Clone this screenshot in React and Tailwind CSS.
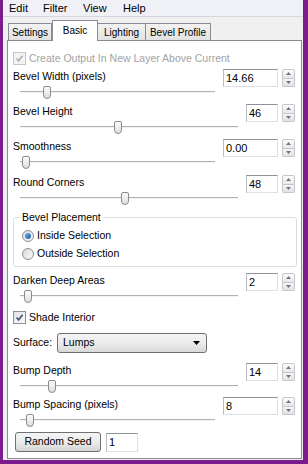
import React from 'react';

const rows = {
  bevelWidth: { label: 'Bevel Width (pixels)', value: '14.66', wide: true, thumb: 30, h: 'h-[35px]' },
  bevelHeight: { label: 'Bevel Height', value: '46', wide: false, thumb: 101, h: 'h-[35px]' },
  smoothness: { label: 'Smoothness', value: '0.00', wide: true, thumb: 9, h: 'h-[36px]' },
  roundCorners: { label: 'Round Corners', value: '48', wide: false, thumb: 108, h: 'h-[35px]' },
  darken: { label: 'Darken Deep Areas', value: '2', wide: false, thumb: 11, h: 'h-[35px]' },
  bumpDepth: { label: 'Bump Depth', value: '14', wide: false, thumb: 35, h: 'h-[34px]' },
  bumpSpacing: { label: 'Bump Spacing (pixels)', value: '8', wide: true, thumb: 13, h: 'h-[34px]' },
};

function Arrow({ up }) {
  return (
    <svg width="5" height="3" viewBox="0 0 5 3">
      <path d={up ? 'M0 3 L2.5 0 L5 3 Z' : 'M0 0 L2.5 3 L5 0 Z'} fill="#6a7487" />
    </svg>
  );
}

function Spinner() {
  return (
    <div className="flex flex-col w-[13px] h-full">
      <div className="flex-1 flex items-center justify-center border border-[#c4c6ca] rounded-t-[2px] bg-gradient-to-b from-[#fdfdfd] to-[#e8e8e8]">
        <Arrow up />
      </div>
      <div className="flex-1 flex items-center justify-center border border-t-0 border-[#c4c6ca] rounded-b-[2px] bg-gradient-to-b from-[#f6f6f6] to-[#e2e2e2]">
        <Arrow />
      </div>
    </div>
  );
}

function SpinBox({ value, wide }) {
  return (
    <div className="flex h-[18px] gap-[4px] pr-[2px]">
      <div className={`${wide ? 'w-[55px]' : 'w-[32px]'} h-full bg-white border border-[#dbdfe6] border-t-[#8d9198] border-l-[#b9bcc2] pl-[2px] flex items-center leading-none text-[11px]`}>
        {value}
      </div>
      <Spinner />
    </div>
  );
}

function SliderRow({ label, value, wide, thumb, h }) {
  return (
    <div className={`flex ${h}`}>
      <div className="flex-1 flex flex-col">
        <div className="h-[14px] leading-[14px]">{label}</div>
        <div className="relative h-[20px] pl-[7px] pr-[8px]">
          <div className="mt-[8px] h-[2px] border-t border-[#b0b2b5] bg-[#f3f3f3]" />
          <div
            className="absolute top-[3px] w-[8px] h-[13px] border border-[#8a8c90] rounded-t-[2px] rounded-b-[4px] bg-gradient-to-b from-[#fbfbfb] to-[#dedede]"
            style={{ left: thumb }}
          />
        </div>
      </div>
      <SpinBox value={value} wide={wide} />
    </div>
  );
}

function Check({ checked, disabled }) {
  return (
    <div className={`w-[13px] h-[13px] border flex items-center justify-center ${disabled ? 'border-[#c6c6c6] bg-[#f4f4f4]' : 'border-[#8e8f8f] bg-gradient-to-br from-[#e2e3e5] to-[#fbfbfb]'}`}>
      {checked && (
        <svg width="9" height="9" viewBox="0 0 9 9">
          <path d="M1.5 4.5 L3.6 6.8 L7.6 1.8" fill="none" stroke={disabled ? '#b4b4b4' : '#4a5a80'} strokeWidth="1.8" />
        </svg>
      )}
    </div>
  );
}

function Radio({ label, selected }) {
  return (
    <div className="flex items-center h-[13px] gap-[3px]">
      <div className="w-[12px] h-[12px] rounded-full border border-[#8e8f8f] bg-gradient-to-br from-[#d8d9db] to-[#fafafa] flex items-center justify-center">
        {selected && <div className="w-[6px] h-[6px] rounded-full bg-gradient-to-br from-[#6fb0e6] to-[#1d5ea6]" />}
      </div>
      <span className="leading-[13px]">{label}</span>
    </div>
  );
}

export default function App() {
  return (
    <div className="w-[308px] h-[464px] bg-[#7a1b8e] pl-[3px] pr-[5px] pb-[4px] flex flex-col font-['Liberation_Sans',Arial,sans-serif] text-[10.5px] text-black">
      <div className="flex-1 flex flex-col bg-[#f0f0f0]">
        <div className="h-[17px] flex items-center pl-[6px] bg-[#f0f0f7] border-b border-[#d6d6e0] text-[11px]">
          <span className="w-[34px]">Edit</span>
          <span className="w-[40px]">Filter</span>
          <span className="w-[40px]">View</span>
          <span>Help</span>
        </div>
        <div className="h-[23px] flex items-end pl-[5px] text-[10px]">
          <div className="w-[44px] h-[17px] flex items-center justify-center border border-b-0 border-[#898c95] bg-gradient-to-b from-[#f3f3f3] to-[#e2e2e2]">Settings</div>
          <div className="relative z-10 w-[46px] h-[21px] -mb-[1px] flex items-center justify-center pb-[2px] border border-b-0 border-[#898c95] bg-white">Basic</div>
          <div className="w-[48px] h-[17px] flex items-center justify-center border border-b-0 border-l-0 border-[#898c95] bg-gradient-to-b from-[#f3f3f3] to-[#e2e2e2]">Lighting</div>
          <div className="w-[65px] h-[17px] flex items-center justify-center border border-b-0 border-l-0 border-[#898c95] bg-gradient-to-b from-[#f3f3f3] to-[#e2e2e2]">Bevel Profile</div>
        </div>
        <div className="flex-1 ml-[4px] mr-[1px] mb-[1px] bg-white border border-[#898c95] pl-[5px] pr-[4px] flex flex-col">
          <div className="mt-[11px] h-[13px] flex items-center gap-[3px] text-[#a3a3a3]">
            <Check checked disabled />
            <span>Create Output In New Layer Above Current</span>
          </div>

          <div className="mt-[4px]">
            <SliderRow {...rows.bevelWidth} />
            <SliderRow {...rows.bevelHeight} />
            <SliderRow {...rows.smoothness} />
            <SliderRow {...rows.roundCorners} />
          </div>

          <div className="relative mt-[7px] h-[50px] border border-[#d5dfe5] rounded-[3px] pl-[8px] pt-[11px] flex flex-col gap-[5px]">
            <span className="absolute -top-[8px] left-[6px] px-[2px] bg-white leading-[14px]">Bevel Placement</span>
            <Radio label="Inside Selection" selected />
            <Radio label="Outside Selection" />
          </div>

          <div className="mt-[6px]">
            <SliderRow {...rows.darken} />
          </div>

          <div className="mt-[3px] h-[13px] flex items-center gap-[3px]">
            <Check checked />
            <span>Shade Interior</span>
          </div>

          <div className="mt-[9px] h-[20px] flex items-center">
            <span className="w-[44px]">Surface:</span>
            <div className="w-[150px] h-full flex items-center justify-between pl-[5px] pr-[6px] border border-[#707070] rounded-[3px] bg-gradient-to-b from-[#f4f4f4] via-[#ececec] to-[#d8d8d8]">
              <span>Lumps</span>
              <svg width="7" height="4" viewBox="0 0 7 4">
                <path d="M0 0 L3.5 4 L7 0 Z" fill="#000" />
              </svg>
            </div>
          </div>

          <div className="mt-[10px]">
            <SliderRow {...rows.bumpDepth} />
            <SliderRow {...rows.bumpSpacing} />
          </div>

          <div className="mt-[1px] h-[20px] flex items-center">
            <div className="ml-[2px] w-[86px] h-full flex items-center justify-center border border-[#707070] rounded-[3px] bg-gradient-to-b from-[#f4f4f4] via-[#ececec] to-[#d4d4d4]">
              Random Seed
            </div>
            <div className="ml-[5px] w-[32px] h-[19px] bg-white border border-[#dbdfe6] border-t-[#8d9198] border-l-[#b9bcc2] pl-[2px] flex items-center text-[11px]">
              1
            </div>
          </div>
        </div>
      </div>
    </div>
  );
}
